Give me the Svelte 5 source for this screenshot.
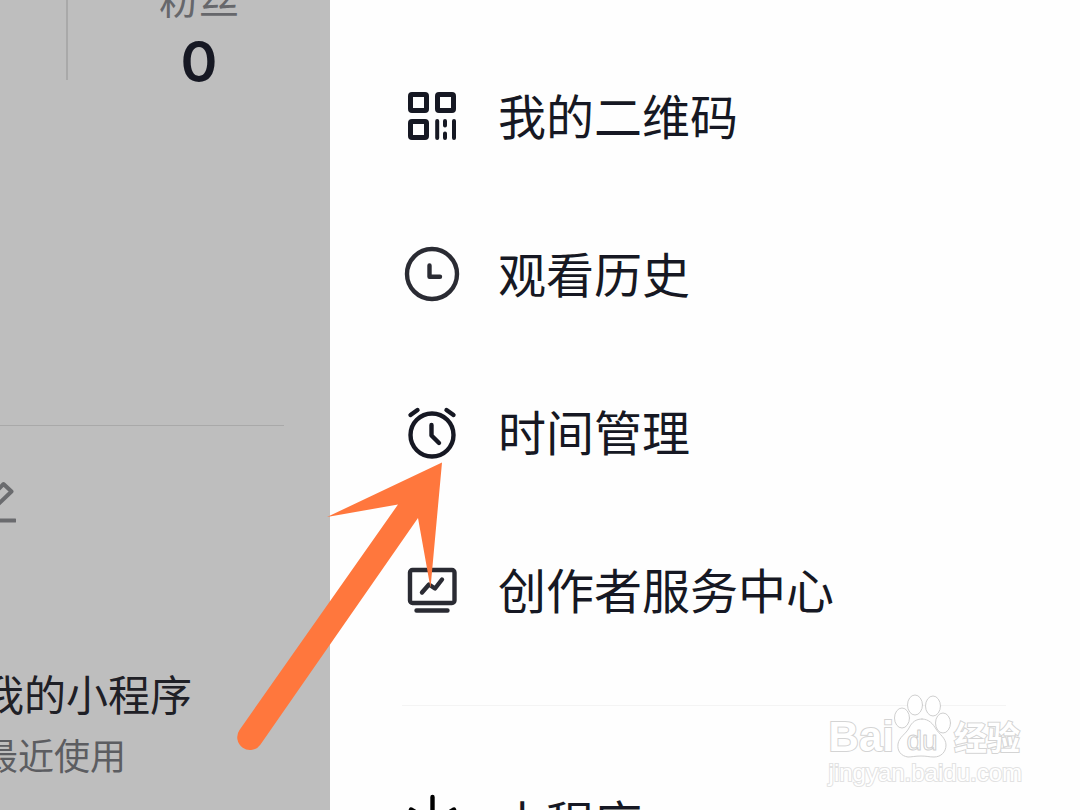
<script>
	const menuItems = [
		{ icon: "qrcode", label: "我的二维码" },
		{ icon: "history", label: "观看历史" },
		{ icon: "alarm", label: "时间管理" },
		{ icon: "creator", label: "创作者服务中心" },
	];

	const moreItems = [{ icon: "spark", label: "小程序" }];
</script>

{#snippet menuIcon(name)}
	<svg class="icon {name}" viewBox="0 0 56 56" aria-hidden="true">
		{#if name === "qrcode"}
			<rect x="6.500" y="6.500" width="16" height="16" rx="1.500" />
			<rect x="33.500" y="6.500" width="16" height="16" rx="1.500" />
			<rect x="6.500" y="33.500" width="16" height="16" rx="1.500" />
			<path class="bars" d="M33.200 33v17M41 33v4.500M41 45.500v4.500M50 33v17" />
		{:else if name === "history"}
			<circle cx="28" cy="28" r="25" />
			<path d="M25.500 19.500v11.300h10.500" />
		{:else if name === "alarm"}
			<circle cx="28" cy="31" r="21.500" />
			<path d="M27.500 21v10.500l7.500 7.500M6.500 11l7-5M49.500 11l-7-5" />
		{:else if name === "creator"}
			<rect x="6" y="8" width="44.500" height="33" rx="2.500" />
			<path d="M12.500 48.500h31M18 30.500l7-8 6 4 7-9" />
		{:else}
			<path d="M28.500 3v50M7 15.500l43 25M50 15.500l-43 25" />
		{/if}
	</svg>
{/snippet}

<div class="screen">
	<section class="profile">
		<div class="stats">
			<div class="stat">
				<span class="stat-label">粉丝</span>
				<strong>0</strong>
			</div>
		</div>
		<div class="tabs">
			<button class="edit" aria-label="编辑">
				<svg viewBox="0 0 48 48" aria-hidden="true">
					<path d="M11 32L35.500 7l8 7.500L20 37h-9zM11 43.500h36" />
				</svg>
			</button>
		</div>
		<div class="programs">
			<h2>我的小程序</h2>
			<p>最近使用</p>
		</div>
	</section>

	<nav class="drawer">
		<ul>
			{#each menuItems as item}
				<li>
					<button class="menu-item">
						{@render menuIcon(item.icon)}
						<span>{item.label}</span>
					</button>
				</li>
			{/each}
		</ul>
		<ul class="more">
			{#each moreItems as item}
				<li>
					<button class="menu-item">
						{@render menuIcon(item.icon)}
						<span>{item.label}</span>
					</button>
				</li>
			{/each}
		</ul>
	</nav>

	<svg class="arrow" viewBox="0 0 116 290" aria-hidden="true">
		<path
			transform="translate(-236 -462)"
			d="M442 462.500L327 517l71-12.500L239.500 730a12.500 12.500 0 0 0 21 14.500L418 518l12.500 70z"
		/>
	</svg>

	<div class="watermark">
		<div class="brand">
			<span class="bai">Bai</span>
			<svg class="paw" viewBox="0 0 60 64" aria-hidden="true">
				<ellipse cx="8" cy="24" rx="7.500" ry="10" />
				<ellipse cx="21" cy="11" rx="7.500" ry="10" />
				<ellipse cx="39" cy="12" rx="7.500" ry="10" />
				<ellipse cx="49" cy="29" rx="7.500" ry="10" />
				<path
					d="M28 25c7 0 11 5 14 10s10 9 10 16-5 12-12 12c-5 0-7-1-13-1s-9 1-13 1C7 62 3 57 4 50s8-10 11-16 7-9 13-9z"
				/>
				<text x="28" y="56" text-anchor="middle">du</text>
			</svg>
			<span class="jingyan">经验</span>
		</div>
		<div class="site">jingyan.baidu.com</div>
	</div>
</div>

<style>
	:global(body) {
		margin: 0;
	}
	.screen {
		position: relative;
		display: grid;
		grid-template-columns: 330px minmax(0, 1fr);
		height: 100vh;
		overflow: hidden;
		background: #fefefe;
		color: #161823;
		font-family: "Noto Sans CJK SC", sans-serif;
	}
	button {
		padding: 0;
		border: none;
		background: none;
		color: inherit;
		font: inherit;
		cursor: pointer;
	}
	svg {
		display: block;
		fill: none;
		stroke: currentColor;
		stroke-linecap: round;
		stroke-linejoin: round;
	}

	/* profile page under the dimmed overlay, scrolled part way */
	.profile {
		overflow: hidden;
		background: #bebebe;
	}
	.stats {
		display: flex;
		justify-content: flex-end;
		height: 426px;
		margin-right: 46px;
		border-bottom: 1px solid #a9a9a9;
		box-sizing: border-box;
	}
	.stat {
		display: flex;
		flex: none;
		flex-direction: column;
		align-items: center;
		gap: 16px;
		width: 264px;
		height: 104px;
		margin: -24px -46px 0 0;
		border-left: 2px solid #a9a9a9;
		box-sizing: border-box;
	}
	.stat-label {
		color: #66676b;
		font-size: 40px;
		line-height: 42px;
	}
	.stat strong {
		font-family: Inter, sans-serif;
		font-size: 56px;
		font-weight: 600;
		line-height: 56px;
	}
	.tabs {
		padding-top: 51px;
	}
	.edit {
		display: block;
		margin-left: -32px;
		color: #6a6b6e;
	}
	.edit svg {
		width: 48px;
		height: 48px;
		stroke-width: 4;
	}
	.programs {
		margin: 144px 0 0 -18px;
	}
	h2,
	p {
		margin: 0;
		font-weight: 400;
	}
	h2 {
		color: #1f2026;
		font-size: 42px;
		line-height: 48px;
	}
	p {
		margin-top: 16px;
		color: #5c5d61;
		font-size: 36px;
		line-height: 42px;
	}

	.drawer {
		padding: 37px 74px 0 72px;
	}
	ul {
		margin: 0;
		padding: 0;
		list-style: none;
	}
	.more {
		margin-top: 36px;
		padding-top: 37px;
		border-top: 1px solid #f4f4f4;
	}
	.menu-item {
		display: flex;
		align-items: center;
		gap: 38px;
		width: 100%;
		height: 158px;
		padding-left: 2px;
		font-size: 48px;
		line-height: 56px;
		text-align: left;
		white-space: nowrap;
	}
	.menu-item span {
		padding-bottom: 4px;
	}
	.icon {
		flex: none;
		width: 56px;
		height: 56px;
		stroke-width: 4.4;
	}
	.qrcode {
		stroke-width: 5;
	}
	.history,
	.creator {
		color: #2a2b33;
	}
	.bars {
		stroke-width: 4;
	}
	.spark {
		color: #000;
	}

	.arrow {
		position: absolute;
		top: 462px;
		left: 236px;
		width: 116px;
		height: 290px;
		overflow: visible;
		fill: #ff773d;
		stroke: none;
		pointer-events: none;
	}

	.watermark {
		position: absolute;
		top: 694px;
		right: 58px;
		color: #fff;
		font-family: "Liberation Sans", "Noto Sans CJK SC", sans-serif;
		pointer-events: none;
	}
	.brand {
		display: flex;
		align-items: flex-end;
		height: 64px;
		font-weight: 700;
	}
	.bai,
	.jingyan,
	.site {
		-webkit-text-stroke: 2px #d4d4d4;
		paint-order: stroke fill;
	}
	.bai {
		font-size: 42px;
		line-height: 42px;
	}
	.paw {
		width: 60px;
		height: 64px;
		fill: #fff;
		stroke: #cfcfcf;
	}
	.paw text {
		font-size: 28px;
		font-weight: 400;
	}
	.jingyan {
		font-size: 33px;
		line-height: 38px;
	}
	.site {
		font-size: 24px;
		line-height: 30px;
		-webkit-text-stroke-color: #e2e2e2;
	}
</style>
